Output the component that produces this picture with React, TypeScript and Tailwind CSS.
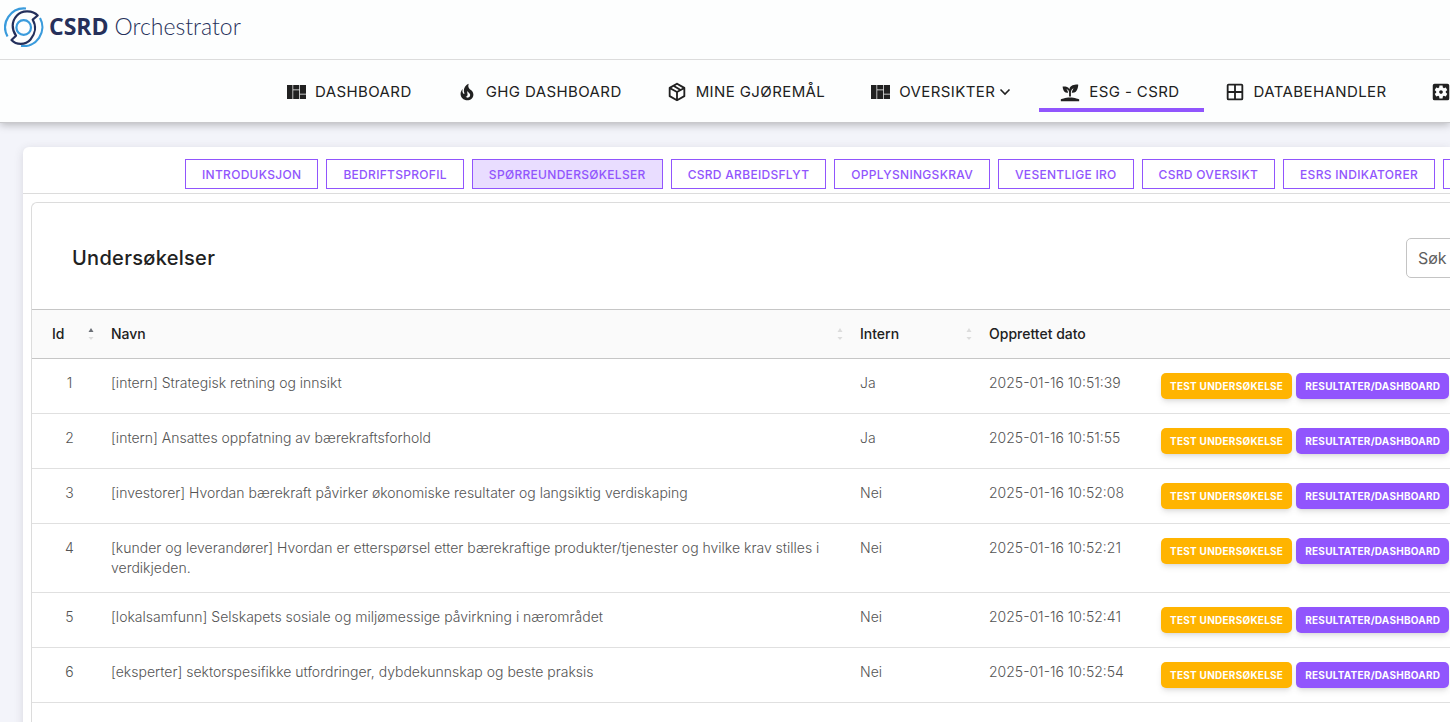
import React, { useState } from 'react';
import { MdSettingsApplications } from 'react-icons/md';

type IconProps = { className?: string };

const BoardIcon = ({ className }: IconProps) => (
  <svg viewBox="0 0 19 14" className={className} fill="currentColor">
    <path d="M0 0h5.500v14H0zM6.200 0h6v4.500h-6zM6.200 5.300h6V14h-6zM12.900 0H19v8.700h-6.100zM12.900 9.600H19V14h-6.100z" />
  </svg>
);

const FireIcon = ({ className }: IconProps) => (
  <svg viewBox="0 0 24 24" className={className} fill="currentColor">
    <path d="M17.66 11.2C17.43 10.9 17.15 10.64 16.89 10.38C16.22 9.78 15.46 9.35 14.82 8.72C13.33 7.26 13 4.85 13.95 3C13 3.23 12.17 3.75 11.46 4.32C8.87 6.4 7.85 10.07 9.07 13.22C9.11 13.32 9.15 13.42 9.15 13.55C9.15 13.77 9 13.97 8.8 14.05C8.57 14.15 8.33 14.09 8.14 13.93C8.08 13.88 8.04 13.83 8 13.76C6.87 12.33 6.69 10.28 7.45 8.64C5.78 10 4.87 12.3 5 14.47C5.06 14.97 5.12 15.47 5.29 15.97C5.43 16.57 5.7 17.17 6 17.7C7.08 19.43 8.95 20.67 10.96 20.92C13.1 21.19 15.39 20.8 17.03 19.32C18.86 17.66 19.5 15 18.56 12.72L18.43 12.46C18.22 12 17.66 11.2 17.66 11.2M14.5 17.5C14.22 17.74 13.76 18 13.4 18.1C12.28 18.5 11.16 17.94 10.5 17.28C11.69 17 12.4 16.12 12.61 15.23C12.78 14.43 12.46 13.77 12.33 13C12.21 12.26 12.23 11.63 12.5 10.94C12.69 11.32 12.89 11.7 13.13 12C13.9 13 15.11 13.44 15.37 14.8C15.41 14.94 15.43 15.08 15.43 15.23C15.46 16.05 15.1 16.95 14.5 17.5Z" />
  </svg>
);

const PackageIcon = ({ className }: IconProps) => (
  <svg viewBox="0 0 24 24" className={className} fill="currentColor">
    <path d="M21 16.5c0 .38-.21.71-.53.88l-7.9 4.44c-.16.12-.36.18-.57.18s-.41-.06-.57-.18l-7.9-4.44A.99.99 0 0 1 3 16.5v-9c0-.38.21-.71.53-.88l7.9-4.44c.16-.12.36-.18.57-.18s.41.06.57.18l7.9 4.44c.32.17.53.5.53.88zM12 4.15L10.11 5.22 16 8.61l1.96-1.11zM6.04 7.5L12 10.85l1.96-1.1-5.88-3.4zM5 15.91l6 3.38v-6.71L5 9.21zm14 0v-6.7l-6 3.37v6.71z" />
  </svg>
);

const SproutIcon = ({ className }: IconProps) => (
  <svg viewBox="0 0 24 24" className={className} fill="currentColor">
    <path d="M2 22v-2s5-2 10-2 10 2 10 2v2zM11.3 9.1C10.1 5.2 4 6.1 4 6.1s.2 7.8 5.9 6.6C9.5 9.8 8 9 8 9c2.8 0 3 3.4 3 3.4V17h2v-4.2s0-3.9 3-4.9c0 0-2 3-2 5 7 .7 7-8.9 7-8.9s-8.900-1-9.700 5.100z" />
  </svg>
);

const GridIcon = ({ className }: IconProps) => (
  <svg viewBox="0 0 24 24" className={className} fill="currentColor">
    <path d="M5 3h14a2 2 0 0 1 2 2v14a2 2 0 0 1-2 2H5a2 2 0 0 1-2-2V5a2 2 0 0 1 2-2zm0 2v6h6V5zm0 14h6v-6H5zm14 0v-6h-6v6zm0-14h-6v6h6z" />
  </svg>
);

const Logo = () => (
  <a href="#" className="flex items-center text-[#26305a]">
    <svg viewBox="0 0 40 40" className="size-10" fill="none" strokeWidth="2.200">
      <g stroke="#3a9bdc">
        <path d="M22 1.500A19 19 0 0 0 3.500 29.500M36 11A19 19 0 0 1 17 39" />
        <circle cx="19.700" cy="20.500" r="7.300" />
      </g>
      <path
        stroke="#232f5b"
        strokeLinejoin="round"
        d="M33.700 8.500C29 3.500 18 2.500 12.700 8.700C7.500 14.500 7.500 22.500 12 28.700L7.500 33C12 38 21.500 38.500 26.500 32.500C31.500 26.500 32.500 19 28.700 12.700Z"
      />
    </svg>
    <span className="ml-[5px] font-['Open_Sans',sans-serif] text-[23px] font-bold">CSRD</span>
    <span className="ml-1.5 font-['Lato',sans-serif] text-[23px] font-light">Orchestrator</span>
  </a>
);

const navItems = [
  { label: 'DASHBOARD', icon: <BoardIcon className="w-[19px]" /> },
  { label: 'GHG DASHBOARD', icon: <FireIcon className="size-[22px]" /> },
  { label: 'MINE GJØREMÅL', icon: <PackageIcon className="size-[22px]" /> },
  { label: 'OVERSIKTER', icon: <BoardIcon className="w-[19px]" />, menu: true },
  { label: 'ESG - CSRD', icon: <SproutIcon className="size-[22px]" />, active: true },
  { label: 'DATABEHANDLER', icon: <GridIcon className="size-[22px]" /> },
];

const tabs = [
  'INTRODUKSJON',
  'BEDRIFTSPROFIL',
  'SPØRREUNDERSØKELSER',
  'CSRD ARBEIDSFLYT',
  'OPPLYSNINGSKRAV',
  'VESENTLIGE IRO',
  'CSRD OVERSIKT',
  'ESRS INDIKATORER',
];

const surveys = [
  { id: 1, name: '[intern] Strategisk retning og innsikt', intern: 'Ja', date: '2025-01-16 10:51:39' },
  { id: 2, name: '[intern] Ansattes oppfatning av bærekraftsforhold', intern: 'Ja', date: '2025-01-16 10:51:55' },
  { id: 3, name: '[investorer] Hvordan bærekraft påvirker økonomiske resultater og langsiktig verdiskaping', intern: 'Nei', date: '2025-01-16 10:52:08' },
  { id: 4, name: '[kunder og leverandører] Hvordan er etterspørsel etter bærekraftige produkter/tjenester og hvilke krav stilles i verdikjeden.', intern: 'Nei', date: '2025-01-16 10:52:21' },
  { id: 5, name: '[lokalsamfunn] Selskapets sosiale og miljømessige påvirkning i nærområdet', intern: 'Nei', date: '2025-01-16 10:52:41' },
  { id: 6, name: '[eksperter] sektorspesifikke utfordringer, dybdekunnskap og beste praksis', intern: 'Nei', date: '2025-01-16 10:52:54' },
];

const SortArrows = ({ up }: { up?: boolean }) => (
  <svg viewBox="0 0 6 14" className="h-[14px] w-[6px]">
    <path d="M3 1l2.500 4h-5z" fill={up ? '#6b6f76' : '#dcdcdc'} />
    <path d="M3 13l2.500-3h-5z" fill="#dcdcdc" />
  </svg>
);

function HeadCell({ label, sort, up }: { label: string; sort?: boolean; up?: boolean }) {
  return (
    <th className="px-5 text-left font-medium">
      <div className="-mr-[23px] flex items-center justify-between">
        {label}
        {sort && <SortArrows up={up} />}
      </div>
    </th>
  );
}

export default function App() {
  const [tab, setTab] = useState('SPØRREUNDERSØKELSER');
  const [query, setQuery] = useState('');
  const rows = surveys.filter((s) => s.name.toLowerCase().includes(query.toLowerCase()));

  return (
    <div className="min-h-screen overflow-hidden bg-[#f3f4fa] font-['Inter',sans-serif] text-[#212121]">
      {/* Top bar */}
      <header className="relative border-b border-[#c9c9cc] bg-[#fdfefe] shadow-[0_2px_8px_rgba(0,0,0,0.25)]">
        <div className="flex h-[60px] border-b border-[#dcdcdc] pb-1.5 pl-1">
          <Logo />
        </div>
        <nav className="flex h-[62px] items-start pl-[265px] pt-3">
          {navItems.map((item) => (
            <a
              key={item.label}
              href="#"
              className={`flex h-10 shrink-0 items-center border-b-4 pl-5 pr-6 pt-1 tracking-wide ${item.active ? 'border-[#9155fd]' : 'border-transparent'}`}
            >
              <span className="mr-2 flex w-[22px] justify-center">{item.icon}</span>
              <span className="whitespace-nowrap text-[15px]">{item.label}</span>
              {item.menu && (
                <svg viewBox="0 0 16 16" className="ml-1 size-4" fill="none" stroke="currentColor" strokeWidth="1.600">
                  <path d="M1.500 5.500L6 10l4.500-4.500" />
                </svg>
              )}
            </a>
          ))}
          <a href="#" aria-label="Innstillinger" className="flex h-10 shrink-0 items-center pl-5">
            <MdSettingsApplications className="size-[22px]" />
          </a>
        </nav>
      </header>

      {/* Main panel */}
      <main className="ml-[23px] mt-6 rounded-tl-md bg-white shadow-[0_2px_10px_rgba(58,53,65,0.15)]">
        <div className="flex gap-2 overflow-hidden border-b border-[#dcdcdc] pb-1 pl-[162px] pt-3">
          {tabs.map((name) => (
            <button
              key={name}
              onClick={() => setTab(name)}
              className={`h-[30px] shrink-0 border border-[#9155fd] px-4 pt-0.5 text-xs font-medium tracking-wide text-[#9155fd] ${tab === name ? 'bg-[#e9ddff]' : 'bg-white'}`}
            >
              {name}
            </button>
          ))}
          <button aria-label="Flere" className="h-[30px] w-32 shrink-0 border border-[#9155fd] bg-white" />
        </div>

        <section className="ml-2 mt-2 rounded-tl-md border-l border-t border-[#dcdcdc]">
          <div className="flex h-[106px] items-center justify-between pl-10 pt-1">
            <h1 className="text-xl font-medium tracking-[0.015em]">Undersøkelser</h1>
            <input
              type="search"
              aria-label="Søk"
              placeholder="Søk"
              value={query}
              onChange={(e) => setQuery(e.target.value)}
              className="-mr-[160px] h-10 w-[204px] rounded-[5px] border border-[#c4c4c4] px-[11px] text-base placeholder:text-[#5f5f5f]"
            />
          </div>

          <table className="w-full table-fixed text-sm">
            <colgroup>
              <col className="w-[59px]" />
              <col />
              <col className="w-[129px]" />
              <col className="w-[192px]" />
              <col className="w-[289px]" />
            </colgroup>
            <thead>
              <tr className="h-[49px] border-y border-[#c6c6c6] bg-[#fafafa]">
                <HeadCell label="Id" sort up />
                <HeadCell label="Navn" sort />
                <HeadCell label="Intern" sort />
                <HeadCell label="Opprettet dato" />
                <th aria-label="Handlinger" />
              </tr>
            </thead>
            <tbody>
              {rows.map((s) => (
                <tr key={s.id} className="border-b border-[#e0e0e0] align-top font-light text-[#545454]">
                  <td className="pl-4 pt-[14px] text-center">{s.id}</td>
                  <td className="py-[14px] pl-5 pr-4">{s.name}</td>
                  <td className="px-5 pt-[14px]">{s.intern}</td>
                  <td className="whitespace-nowrap px-5 pt-[14px]">{s.date}</td>
                  <td className="py-[14px]">
                    <div className="flex gap-1">
                      <button className="h-[26px] shrink-0 rounded-[5px] bg-[#ffb400] px-[9px] text-[10px] font-bold tracking-wide text-white shadow-md">
                        TEST UNDERSØKELSE
                      </button>
                      <button className="h-[26px] shrink-0 rounded-[5px] bg-[#9155fd] px-[9px] text-[10px] font-bold tracking-wide text-white shadow-md">
                        RESULTATER/DASHBOARD
                      </button>
                    </div>
                  </td>
                </tr>
              ))}
            </tbody>
          </table>
          <div className="h-10" />
        </section>
      </main>
    </div>
  );
}
